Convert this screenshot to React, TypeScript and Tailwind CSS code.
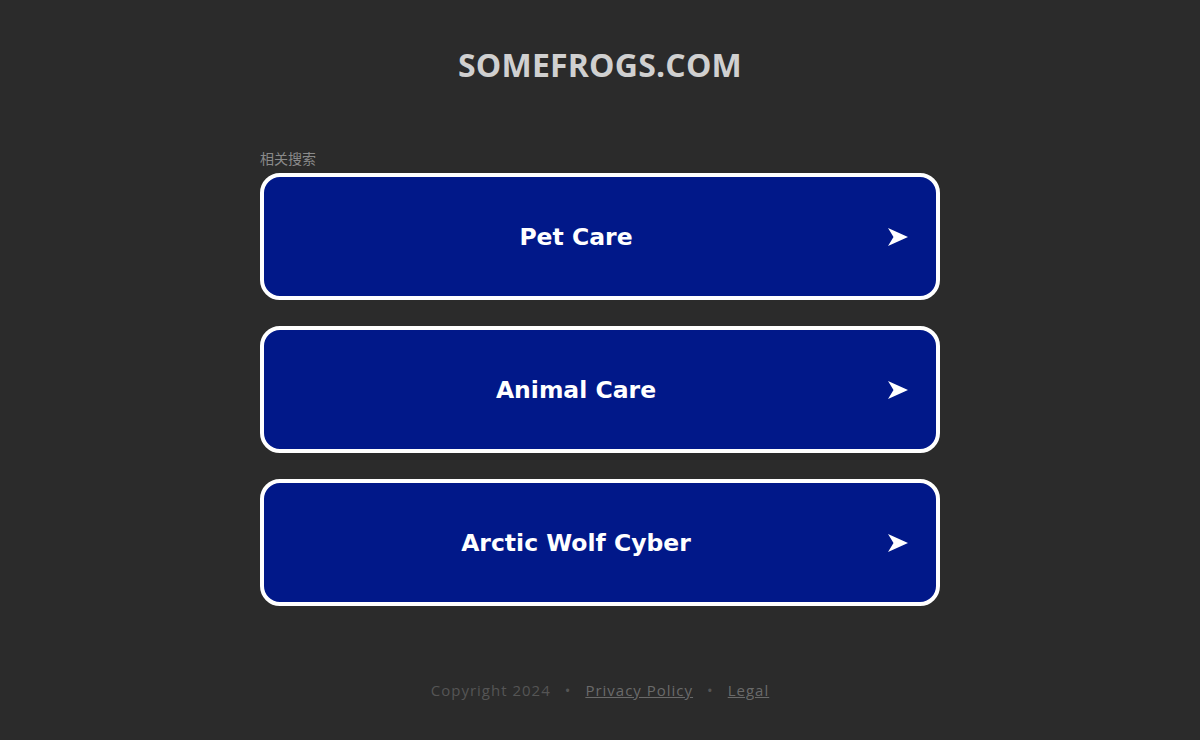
import { Fragment } from "react";

const searches = ["Pet Care", "Animal Care", "Arctic Wolf Cyber"];

function Arrow() {
  return (
    <svg width="20" height="18" viewBox="0 0 20 18" className="shrink-0">
      <path d="M0 0 L20 9 L0 18 L5.5 9 Z" fill="#ffffff" />
    </svg>
  );
}

export default function App() {
  return (
    <div className="min-h-[740px] w-full bg-[#2b2b2b] flex flex-col items-center font-['Open_Sans',sans-serif]">
      <h1 className="mt-[45px] text-[32px] font-bold leading-[40px] text-[#d0d0d0] tracking-[0.2px]">
        SOMEFROGS.COM
      </h1>

      <div className="mt-[64px] w-[680px]">
        <div className="text-[14px] leading-[18px] text-[#8a8a8a] font-['Noto_Sans_CJK_SC',sans-serif] mb-[6px]">
          相关搜索
        </div>
        <div className="flex flex-col gap-[26px]">
          {searches.map((s) => (
            <Fragment key={s}>
              <a
                href="#"
                className="flex h-[127px] items-center rounded-[20px] border-4 border-white bg-[#011889] pr-[28px]"
              >
                <span className="flex-1 pt-[2px] text-center text-[23.5px] font-bold text-white font-['DejaVu_Sans',sans-serif]">
                  {s}
                </span>
                <Arrow />
              </a>
            </Fragment>
          ))}
        </div>
      </div>

      <div className="mt-[73px] flex items-center gap-[14px] text-[15px] tracking-[1px] text-[#555555]">
        <span>Copyright 2024</span>
        <span>•</span>
        <a href="#" className="underline text-[#6a6a6a]">Privacy Policy</a>
        <span>•</span>
        <a href="#" className="underline text-[#6a6a6a]">Legal</a>
      </div>
    </div>
  );
}
